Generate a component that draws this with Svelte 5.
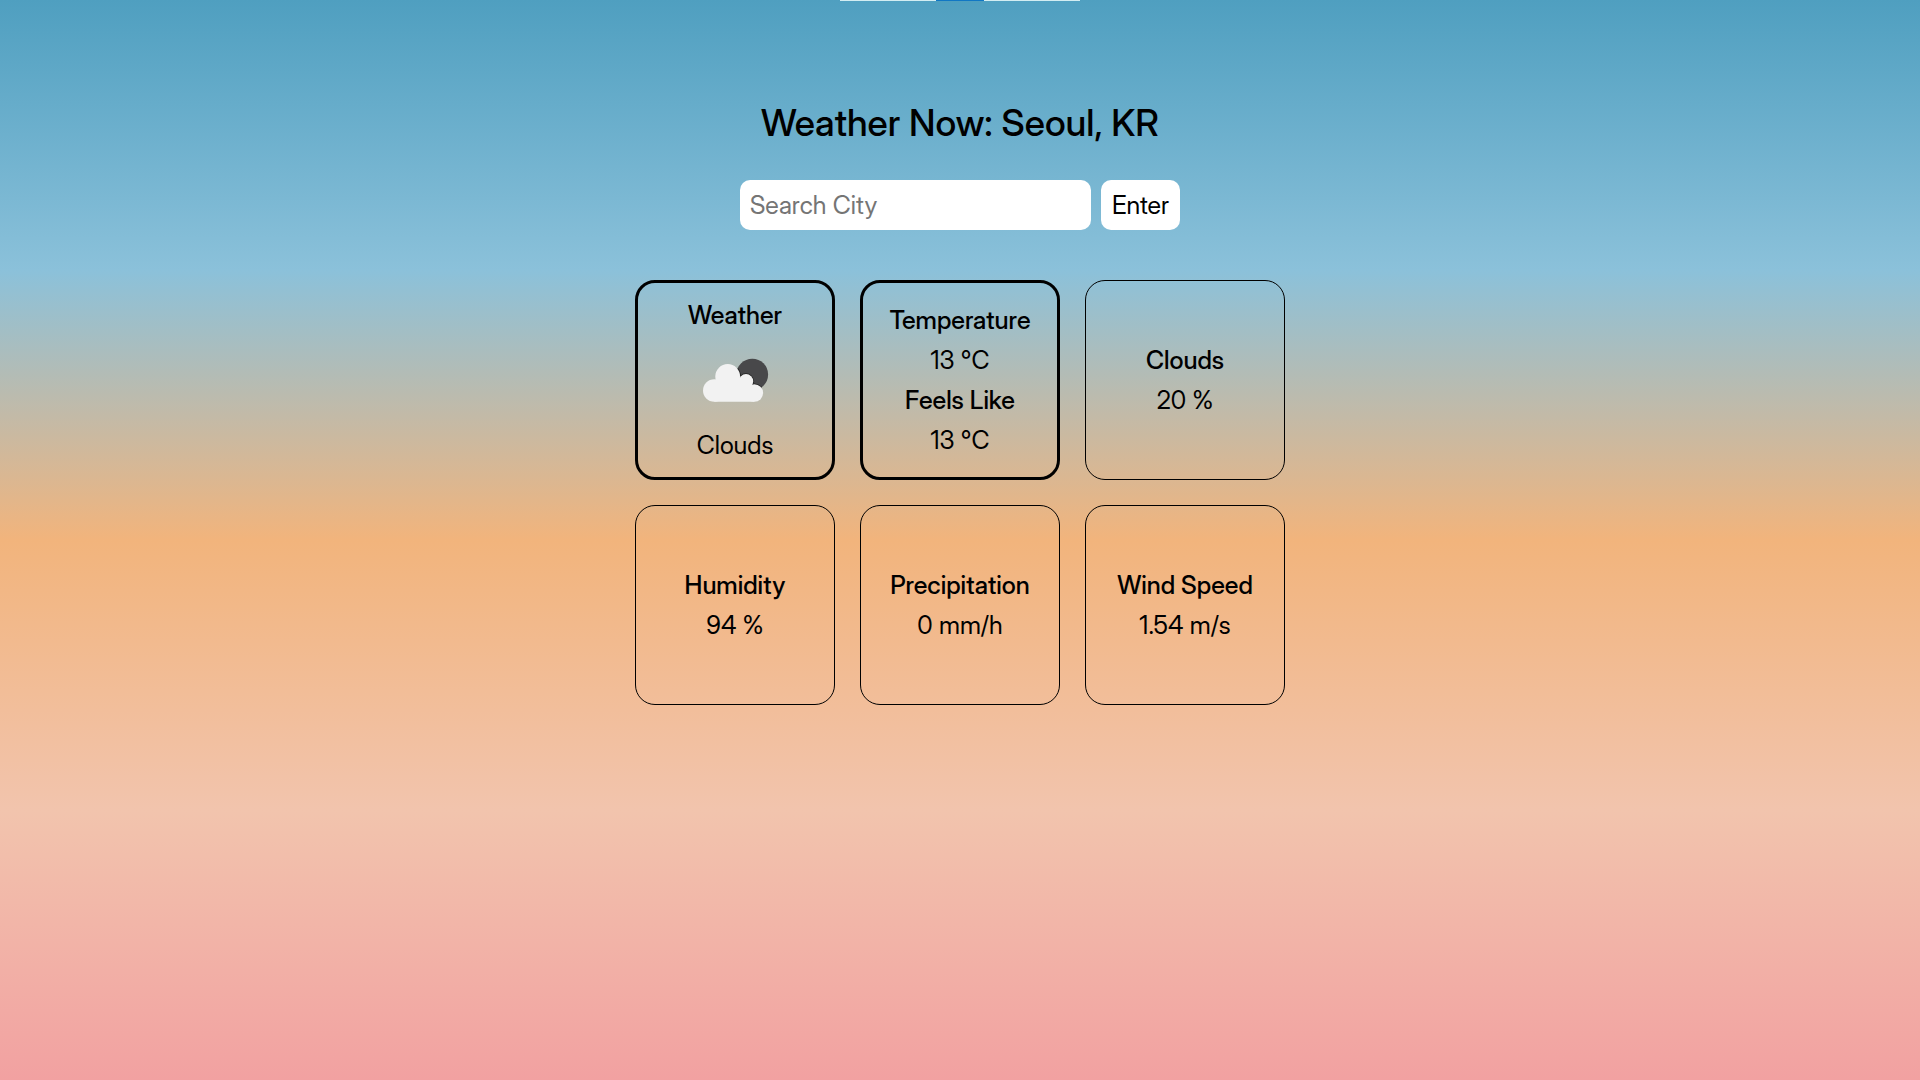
<script>
  let city = $state('');
  const readings = [
    { label: 'Clouds', value: '20 %' },
    { label: 'Humidity', value: '94 %' },
    { label: 'Precipitation', value: '0 mm/h' },
    { label: 'Wind Speed', value: '1.54 m/s' }
  ];
</script>

<div class="page">
  <div class="strip" aria-hidden="true"></div>
  <main>
    <h1>Weather Now: Seoul, KR</h1>
    <form onsubmit={(e) => e.preventDefault()}>
      <input type="text" aria-label="Search City" placeholder="Search City" bind:value={city} />
      <button type="submit">Enter</button>
    </form>
    <div class="grid">
      <section class="card primary">
        <h2>Weather</h2>
        <svg class="icon" viewBox="0 -1 100 90" aria-hidden="true">
          <clipPath id="moon"><circle cx="67.3" cy="38.5" r="15.8" /></clipPath>
          <circle cx="67.3" cy="38.5" r="15.8" fill="#48484a" />
          <g clip-path="url(#moon)" fill="#222">
            <circle cx="42.7" cy="40.4" r="13.2" />
            <circle cx="61" cy="45.3" r="8" />
            <circle cx="69.3" cy="57" r="9.6" />
          </g>
          <g fill="#f2f2f2">
            <circle cx="29.3" cy="54.5" r="11.3" />
            <circle cx="42.7" cy="40.4" r="12.4" />
            <circle cx="61" cy="45.3" r="7.2" />
            <circle cx="69.3" cy="57" r="8.8" />
            <path d="M29.3 65.8h40V52L61 42H31z" />
          </g>
        </svg>
        <p>Clouds</p>
      </section>
      <section class="card primary">
        <h2>Temperature</h2>
        <p>13 °C</p>
        <h2>Feels Like</h2>
        <p>13 °C</p>
      </section>
      {#each readings as r}
        <section class="card">
          <h2>{r.label}</h2>
          <p>{r.value}</p>
        </section>
      {/each}
    </div>
  </main>
</div>

<style>
  :global(body) { margin: 0; }
  .page {
    position: relative;
    min-height: 100vh;
    background: linear-gradient(#4f9fc0, #8bc1da 25%, #f2b47c 50%, #f2c4ad 75%, #f2a1a1);
    font-family: "Inter Display", Inter, sans-serif;
    font-size: 25px;
    line-height: 40px;
    color: #000;
  }
  .strip {
    position: absolute;
    top: 0;
    left: 50%;
    width: 240px;
    height: 1px;
    transform: translateX(-50%);
    background: linear-gradient(90deg, #d2edf2 40%, #1177c4 40% 60%, #d2edf2 60%);
  }
  main {
    display: flex;
    flex-direction: column;
    align-items: center;
    padding: 98px 20px 40px;
  }
  h1, h2, p { margin: 0; }
  h1 { font-size: 37px; font-weight: 500; line-height: 50px; }
  form { display: flex; gap: 10px; margin: 32px 0 50px; }
  input, button {
    box-sizing: border-box;
    height: 50px;
    padding: 0 10px;
    border: 0;
    border-radius: 10px;
    background: #fff;
    font: inherit;
    color: #000;
  }
  input { width: 351px; }
  button { min-width: 79px; }
  input::placeholder { color: #757575; }
  .grid {
    display: grid;
    grid-template-columns: repeat(3, 200px);
    gap: 25px;
  }
  .card {
    box-sizing: border-box;
    min-height: 200px;
    border: 1px solid #000;
    border-radius: 20px;
    display: flex;
    flex-direction: column;
    align-items: center;
    justify-content: center;
  }
  .primary { border-width: 3px; }
  h2 { font-size: 25px; font-weight: 500; line-height: 40px; }
  .icon { width: 100px; height: 90px; }
</style>
